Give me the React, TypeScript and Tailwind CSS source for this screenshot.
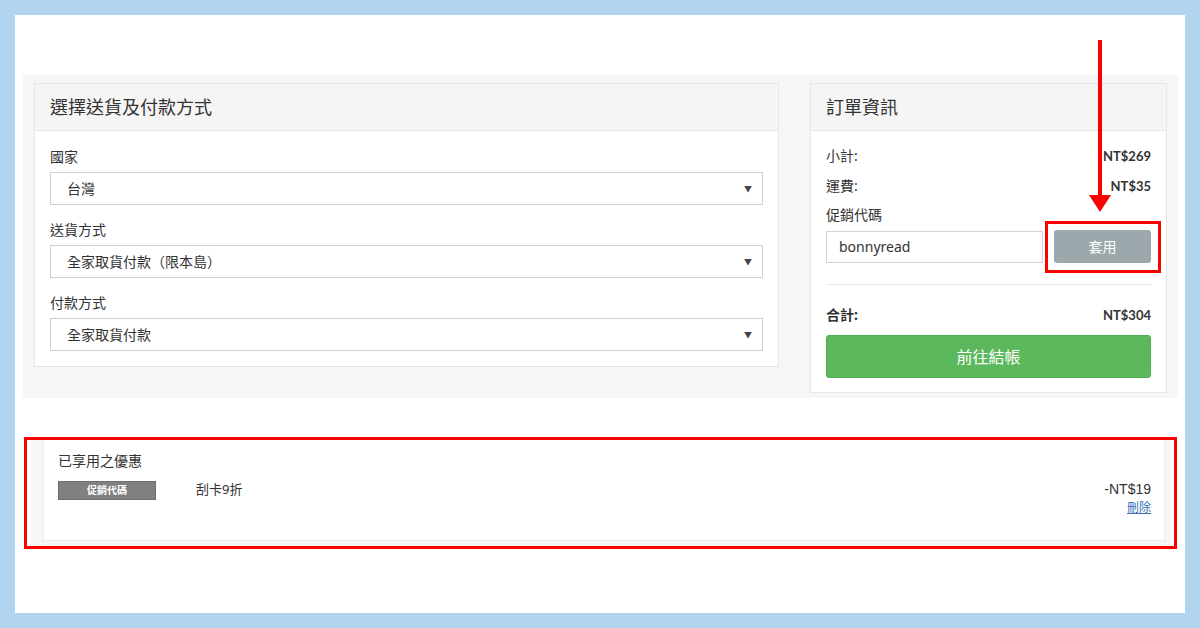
import React from 'react';

const cjk = { fontFamily: '"Noto Sans", "Noto Sans CJK TC", sans-serif' };
const num = { fontFamily: 'Lato, "Noto Sans CJK TC", sans-serif' };

function SelectBox({ value }: { value: string }) {
  return (
    <div className="flex h-[33px] items-center justify-between border border-[#cfcfcf] bg-white pl-[16px] pr-[10px] text-[14px] text-[#333]">
      <span>{value}</span>
      <span className="text-[8px] text-[#444]">▼</span>
    </div>
  );
}

function Field({ label, value }: { label: string; value: string }) {
  return (
    <div className="flex flex-col">
      <div className="mb-[5px] h-[20px] text-[14px] leading-[20px] text-[#333]">{label}</div>
      <SelectBox value={value} />
    </div>
  );
}

function PanelHeader({ title }: { title: string }) {
  return (
    <div className="flex h-[47px] items-center border-b border-[#e6e6e6] bg-[#f5f5f5] px-[15px] text-[18px] text-[#333]">
      {title}
    </div>
  );
}

export default function App() {
  return (
    <div className="relative h-[628px] w-[1200px] bg-[#b1d4ef] p-[15px]" style={cjk}>
      <div className="h-full w-full bg-white pt-[60px]">
        {/* checkout section */}
        <div className="mx-[8px] flex w-[1155px] items-start gap-[31px] bg-[#f6f6f8] px-[11px] pb-[5px] pt-[8px]">
          <div className="w-[745px] border border-[#e6e6e6] bg-white">
            <PanelHeader title="選擇送貨及付款方式" />
            <div className="flex flex-col gap-[15px] px-[15px] pb-[15px] pt-[16px]">
              <Field label="國家" value="台灣" />
              <Field label="送貨方式" value="全家取貨付款（限本島）" />
              <Field label="付款方式" value="全家取貨付款" />
            </div>
          </div>

          <div className="w-[357px] border border-[#e6e6e6] bg-white">
            <PanelHeader title="訂單資訊" />
            <div className="flex flex-col px-[15px] pb-[14px] pt-[15px] text-[14px] text-[#333]">
              <div className="flex h-[20px] items-center justify-between leading-[20px]">
                <span>小計:</span>
                <span className="text-[13px] font-bold" style={num}>NT$269</span>
              </div>
              <div className="mt-[10px] flex h-[20px] items-center justify-between leading-[20px]">
                <span>運費:</span>
                <span className="text-[13px] font-bold" style={num}>NT$35</span>
              </div>
              <div className="mt-[9px] h-[20px] leading-[20px]">促銷代碼</div>
              <div className="mt-[5px] flex items-center gap-[11px]">
                <div className="flex h-[32px] w-[217px] items-center border border-[#d4d4d4] px-[12px] text-[14px] text-[#333]">
                  bonnyread
                </div>
                <div className="relative flex-1">
                  <div className="flex h-[33px] items-center justify-center rounded-[3px] bg-[#9da8ad] text-[14px] text-white">
                    套用
                  </div>
                  <div className="absolute -bottom-[10px] -left-[9px] -right-[10px] -top-[9px] border-[3px] border-[#ff0000]" />
                </div>
              </div>
              <div className="mt-[21px] h-px bg-[#e8e8e8]" />
              <div className="mt-[20px] flex h-[20px] items-center justify-between font-bold leading-[20px]">
                <span>合計:</span>
                <span className="text-[13px]" style={num}>NT$304</span>
              </div>
              <div className="mt-[10px] flex h-[43px] items-center justify-center rounded-[3px] border border-[#52ad52] bg-[#5cb85c] text-[16px] text-white">
                前往結帳
              </div>
            </div>
          </div>
        </div>

        {/* applied discounts */}
        <div className="mx-[9px] mt-[39px] w-[1153px] border-[3px] border-[#ff0000] pl-[4px] pr-[3px]">
          <div className="bg-[#f6f6f8] pb-[5px] pl-[12px] pr-[6px]">
            <div className="h-[101px] border border-t-0 border-[#ebebeb] bg-white pl-[14px] pr-[13px] pt-[11px]">
              <div className="h-[20px] text-[14px] leading-[20px] text-[#333]">已享用之優惠</div>
              <div className="mt-[8px] flex items-start">
                <div className="mt-[2px] flex h-[19px] w-[98px] items-center justify-center border border-[#6e6e6e] bg-[#808080] text-[10px] font-bold text-white">
                  促銷代碼
                </div>
                <div className="ml-[40px] text-[13px] leading-[20px] text-[#333]">刮卡9折</div>
                <div className="ml-auto flex flex-col items-end">
                  <span
                    className="text-[14px] leading-[20px] text-[#333]"
                    style={{ fontFamily: '"Liberation Sans", Arial, sans-serif' }}
                  >
                    -NT$19
                  </span>
                  <span className="text-[12px] leading-[18px] text-[#3a6fb5] underline">刪除</span>
                </div>
              </div>
            </div>
          </div>
        </div>
      </div>

      {/* annotation arrow */}
      <svg className="absolute left-[1088px] top-[40px]" width="24" height="172" viewBox="0 0 24 172">
        <rect x="10" y="0" width="4" height="156" fill="#ff0000" />
        <polygon points="1,155 23,155 12,172" fill="#ff0000" />
      </svg>
    </div>
  );
}
